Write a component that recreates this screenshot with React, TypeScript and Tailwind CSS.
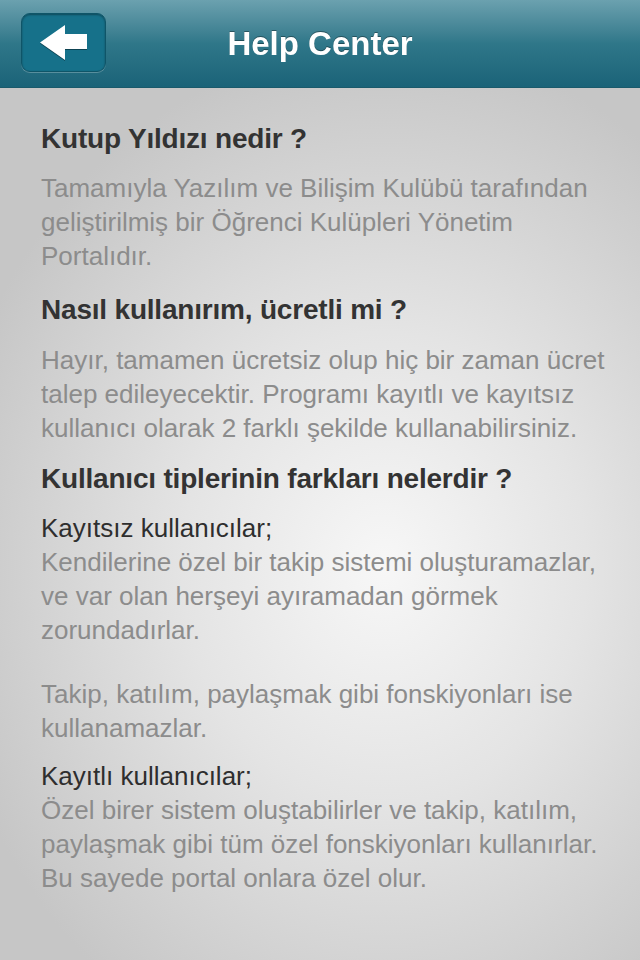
import React from 'react';

const font = { fontFamily: '"Liberation Sans", Arial, Helvetica, sans-serif' };

function BackArrow() {
  return (
    <svg width="47" height="35" viewBox="0 0 47 35" className="drop-shadow-[0_1px_0_rgba(0,0,0,0.4)]">
      <path d="M0 17.5 L25 0 L25 9 L47 9 L47 24 L25 24 L25 35 Z" fill="#ffffff" />
    </svg>
  );
}

function Heading({ children }: { children: React.ReactNode }) {
  return <h2 className="text-[28px] font-bold leading-[34px] text-[#333333] tracking-[-0.2px]">{children}</h2>;
}

function Para({ children, className = '' }: { children: React.ReactNode; className?: string }) {
  return <p className={`text-[26px] leading-[34px] text-[#8c8c8c] whitespace-nowrap ${className}`}>{children}</p>;
}

export default function App() {
  return (
    <div className="w-[640px] h-[960px] flex flex-col overflow-hidden" style={font}>
      <header className="h-[88px] shrink-0 relative flex items-center justify-center bg-gradient-to-b from-[#6ba1af] via-[#2f7789] to-[#1a6378] border-b border-[#1a5a6b]">
        <button className="absolute left-[21px] top-[13px] w-[85px] h-[59px] rounded-[9px] bg-[#16718a] border border-[#0f5568] shadow-[inset_0_1px_2px_rgba(0,0,0,0.35),0_1px_0_rgba(255,255,255,0.25)] flex items-center justify-center">
          <BackArrow />
        </button>
        <h1 className="text-white text-[33px] font-bold drop-shadow-[0_-1px_0_rgba(0,0,0,0.35)]">Help Center</h1>
      </header>
      <main className="flex-1 px-[41px] pt-[34px] bg-[radial-gradient(ellipse_70%_60%_at_60%_55%,#f7f7f7_0%,#e4e4e4_45%,#c6c6c6_100%)]">
        <Heading>Kutup Yıldızı nedir ?</Heading>
        <Para className="mt-[15px]">
          Tamamıyla Yazılım ve Bilişim Kulübü tarafından<br />
          geliştirilmiş bir Öğrenci Kulüpleri Yönetim<br />
          Portalıdır.
        </Para>
        <div className="mt-[20px]">
          <Heading>Nasıl kullanırım, ücretli mi ?</Heading>
        </div>
        <Para className="mt-[16px]">
          Hayır, tamamen ücretsiz olup hiç bir zaman ücret<br />
          talep edileyecektir. Programı kayıtlı ve kayıtsız<br />
          kullanıcı olarak 2 farklı şekilde kullanabilirsiniz.
        </Para>
        <div className="mt-[17px]">
          <Heading>Kullanıcı tiplerinin farkları nelerdir ?</Heading>
        </div>
        <p className="mt-[15px] text-[26px] leading-[34px] text-[#2e2e2e]">Kayıtsız kullanıcılar;</p>
        <Para>
          Kendilerine özel bir takip sistemi oluşturamazlar,<br />
          ve var olan herşeyi ayıramadan görmek<br />
          zorundadırlar.
        </Para>
        <Para className="mt-[30px]">
          Takip, katılım, paylaşmak gibi fonskiyonları ise<br />
          kullanamazlar.
        </Para>
        <p className="mt-[14px] text-[26px] leading-[34px] text-[#2e2e2e]">Kayıtlı kullanıcılar;</p>
        <Para>
          Özel birer sistem oluştabilirler ve takip, katılım,<br />
          paylaşmak gibi tüm özel fonskiyonları kullanırlar.<br />
          Bu sayede portal onlara özel olur.
        </Para>
      </main>
    </div>
  );
}
